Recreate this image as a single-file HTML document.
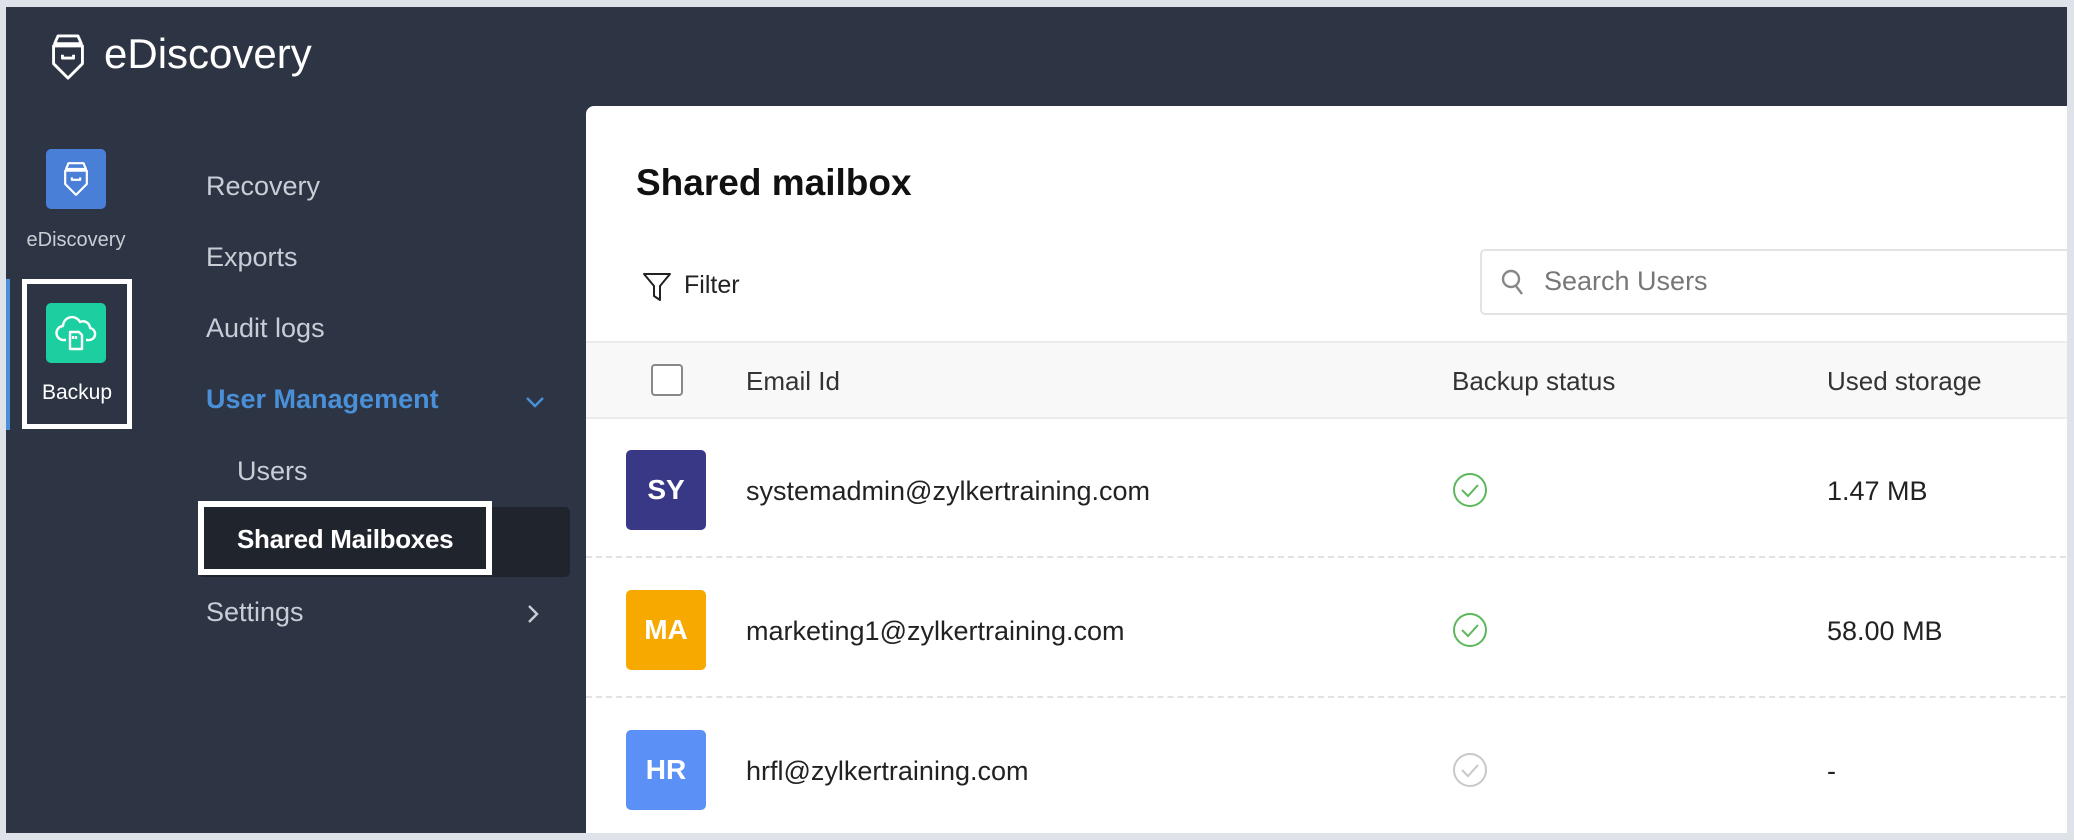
<!DOCTYPE html>
<html><head><meta charset="utf-8"><style>
*{margin:0;padding:0;box-sizing:border-box}
body{width:2074px;height:840px;overflow:hidden;background:#dde3e8;font-family:"Liberation Sans",sans-serif;position:relative}
.a{position:absolute}
#app{left:6px;top:7px;width:2061px;height:826px;background:#2d3545;overflow:hidden}
.menu{color:#c9ced6;font-size:27px;left:200px}
.card{left:580px;top:99px;width:1490px;height:740px;background:#fff;border-radius:8px 0 0 0}
.hd{font-size:26px;color:#333}
.row{left:0;width:1490px;height:139px;border-bottom:2px dashed #e2e2e2}
.av{left:40px;width:80px;height:80px;border-radius:5px;color:#fff;font-weight:bold;font-size:28px;text-align:center;line-height:80px}
.em{left:160px;font-size:27px;color:#222}
.st{left:1241px;font-size:27px;color:#222}
</style></head><body>
<div id="app" class="a">
 <svg class="a" style="left:42px;top:25px" width="40" height="50" viewBox="0 0 36 44" fill="none" stroke="#fff" stroke-width="2.6" stroke-linejoin="round"><path d="M9 3h18l3 7H6z"/><path d="M5 12h26v16l-13 13-13-13z"/><path d="M13 20v3h10v-3"/></svg>
 <div class="a" style="left:98px;top:23px;font-size:42px;color:#fff">eDiscovery</div>
 <div class="a" style="left:40px;top:142px;width:60px;height:60px;background:#4a7fd8;border-radius:5px"></div>
 <svg class="a" style="left:55px;top:152px" width="30" height="40" viewBox="0 0 36 44" fill="none" stroke="#fff" stroke-width="2.6" stroke-linejoin="round"><path d="M9 3h18l3 7H6z"/><path d="M5 12h26v16l-13 13-13-13z"/><path d="M13 20v3h10v-3"/></svg>
 <div class="a" style="left:14px;top:222px;width:112px;text-align:center;font-size:20px;color:#c9ced6">eDiscovery</div>
 <div class="a" style="left:0;top:272px;width:4px;height:151px;background:#4a90d9"></div>
 <div class="a" style="left:16px;top:272px;width:110px;height:150px;border:5px solid #fff"></div>
 <div class="a" style="left:40px;top:296px;width:60px;height:60px;background:#1ccfa0;border-radius:5px"></div>
 <svg class="a" style="left:48px;top:305px" width="44" height="42" viewBox="0 0 44 42" fill="none" stroke="#fff" stroke-width="2.4" stroke-linejoin="round"><path d="M12 28H10a7 7 0 0 1-1-14 9 9 0 0 1 17-4 7 7 0 0 1 10 6 6 6 0 0 1-2 12h-2"/><path d="M16 20h9l3 3v14H16z"/><path d="M19 24v3M22 24v3"/></svg>
 <div class="a" style="left:16px;top:374px;width:110px;text-align:center;font-size:21px;color:#fff">Backup</div>
 <div class="a menu" style="top:164px">Recovery</div>
 <div class="a menu" style="top:235px">Exports</div>
 <div class="a menu" style="top:306px">Audit logs</div>
 <div class="a menu" style="top:377px;color:#4a90d9;font-weight:bold">User Management</div>
 <svg class="a" style="left:518px;top:388px" width="22" height="14" viewBox="0 0 22 14" fill="none" stroke="#4a90d9" stroke-width="2.4"><path d="M3 3l8 8 8-8"/></svg>
 <div class="a menu" style="top:449px;left:231px">Users</div>
 <div class="a" style="left:192px;top:500px;width:372px;height:70px;background:#1f242d;border-radius:5px"></div>
 <div class="a" style="left:192px;top:494px;width:294px;height:74px;border:6px solid #fff;background:#1f242d"></div>
 <div class="a" style="left:231px;top:517px;font-size:26px;letter-spacing:-0.3px;color:#fff;font-weight:bold">Shared Mailboxes</div>
 <div class="a menu" style="top:590px">Settings</div>
 <svg class="a" style="left:520px;top:596px" width="14" height="22" viewBox="0 0 14 22" fill="none" stroke="#c9ced6" stroke-width="2.4"><path d="M3 3l8 8-8 8"/></svg>

 <div class="a card">
  <div class="a" style="left:50px;top:56px;font-size:37px;font-weight:bold;color:#111">Shared mailbox</div>
  <svg class="a" style="left:56px;top:165px" width="30" height="32" viewBox="0 0 30 32" fill="none" stroke="#222" stroke-width="2"><path d="M2 3h26L18 15v14l-6-4V15z" stroke-linejoin="round"/></svg>
  <div class="a" style="left:98px;top:165px;font-size:25px;color:#222">Filter</div>
  <div class="a" style="left:894px;top:143px;width:620px;height:66px;border:2px solid #e3e3e3;border-radius:5px"></div>
  <svg class="a" style="left:914px;top:162px" width="26" height="30" viewBox="0 0 26 30" fill="none" stroke="#888" stroke-width="2.4"><circle cx="11" cy="11" r="8"/><path d="M16 18l6 8"/></svg>
  <div class="a" style="left:958px;top:160px;font-size:27px;color:#777">Search Users</div>
  <div class="a" style="left:0;top:235px;width:1490px;height:78px;background:#f8f8f8;border-top:2px solid #ebebeb;border-bottom:2px solid #ebebeb"></div>
  <div class="a" style="left:65px;top:258px;width:32px;height:32px;border:2px solid #888;border-radius:4px;background:#fff"></div>
  <div class="a hd" style="left:160px;top:260px">Email Id</div>
  <div class="a hd" style="left:866px;top:260px">Backup status</div>
  <div class="a hd" style="left:1241px;top:260px">Used storage</div>

  <div class="a row" style="top:313px"></div>
  <div class="a av" style="top:344px;background:#383886">SY</div>
  <div class="a em" style="top:370px">systemadmin@zylkertraining.com</div>
  <svg class="a" style="left:866px;top:366px" width="36" height="36" viewBox="0 0 36 36" fill="none" stroke="#5cb85c" stroke-width="2"><circle cx="18" cy="18" r="16"/><path d="M10 18l6 6 10-11"/></svg>
  <div class="a st" style="top:370px">1.47 MB</div>

  <div class="a row" style="top:453px"></div>
  <div class="a av" style="top:484px;background:#f7a900">MA</div>
  <div class="a em" style="top:510px">marketing1@zylkertraining.com</div>
  <svg class="a" style="left:866px;top:506px" width="36" height="36" viewBox="0 0 36 36" fill="none" stroke="#5cb85c" stroke-width="2"><circle cx="18" cy="18" r="16"/><path d="M10 18l6 6 10-11"/></svg>
  <div class="a st" style="top:510px">58.00 MB</div>

  <div class="a av" style="top:624px;background:#5b91f7">HR</div>
  <div class="a em" style="top:650px">hrfl@zylkertraining.com</div>
  <svg class="a" style="left:866px;top:646px" width="36" height="36" viewBox="0 0 36 36" fill="none" stroke="#c8c8c8" stroke-width="2"><circle cx="18" cy="18" r="16"/><path d="M10 18l6 6 10-11"/></svg>
  <div class="a st" style="top:650px">-</div>
 </div>
</div>
</body></html>
